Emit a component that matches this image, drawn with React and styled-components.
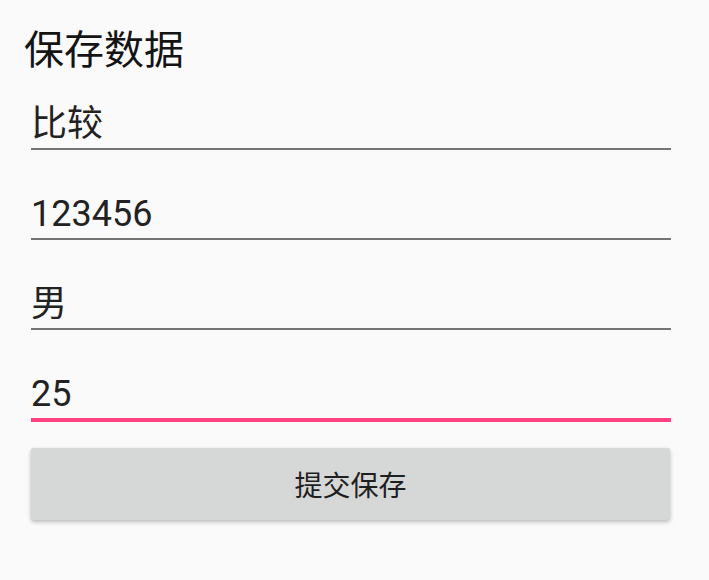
import React from "react";
import styled, { createGlobalStyle } from "styled-components";

const GlobalStyle = createGlobalStyle`
	html, body {
		margin: 0;
		padding: 0;
		background: #fafafa;
	}
	body {
		font-family: Roboto, "Noto Sans CJK SC", sans-serif;
	}
`;

const fields = [
	{ name: "name", value: "比较" },
	{ name: "password", value: "123456" },
	{ name: "sex", value: "男" },
	{ name: "age", value: "25", focused: true },
];

const App = () => {
	return (
		<>
			<GlobalStyle />
			<StyledPage>
				<StyledTitle>保存数据</StyledTitle>
				<StyledForm onSubmit={(e) => e.preventDefault()}>
					{fields.map((field) => (
						<StyledField
							key={field.name}
							name={field.name}
							defaultValue={field.value}
							$focused={field.focused}
						/>
					))}
					<StyledButton type="submit">提交保存</StyledButton>
				</StyledForm>
			</StyledPage>
		</>
	);
};

const StyledPage = styled.div`
	min-height: 580px;
	box-sizing: border-box;
	padding: 29px 24px 0;
`;

const StyledTitle = styled.div`
	font-family: Roboto, "Noto Sans CJK SC", sans-serif;
	font-size: 40px;
	line-height: 43px;
	color: #141414;
`;

const StyledForm = styled.form`
	width: 640px;
	margin-left: 7px;
	display: flex;
	flex-direction: column;
	gap: 12px;
`;

const StyledField = styled.input`
	display: block;
	width: 100%;
	box-sizing: content-box;
	margin: 0;
	padding: 31px 0 3px;
	height: 42px;
	border: none;
	border-bottom: ${({ $focused }) =>
		$focused ? "4px solid #ff4081" : "2px solid #757575"};
	background: transparent;
	outline: none;
	font-family: Roboto, "Noto Sans CJK SC", sans-serif;
	font-size: 36px;
	line-height: 42px;
	color: #222222;
`;

const StyledButton = styled.button`
	margin-top: 14px;
	width: 639px;
	height: 72px;
	border: none;
	border-radius: 3px;
	background: #d6d7d7;
	box-shadow: 0 2px 4px rgba(0, 0, 0, 0.26), 0 0 1px rgba(0, 0, 0, 0.1);
	font-family: Roboto, "Noto Sans CJK SC", sans-serif;
	font-size: 28px;
	color: #1f1f1f;
	cursor: pointer;
`;

export default App;
